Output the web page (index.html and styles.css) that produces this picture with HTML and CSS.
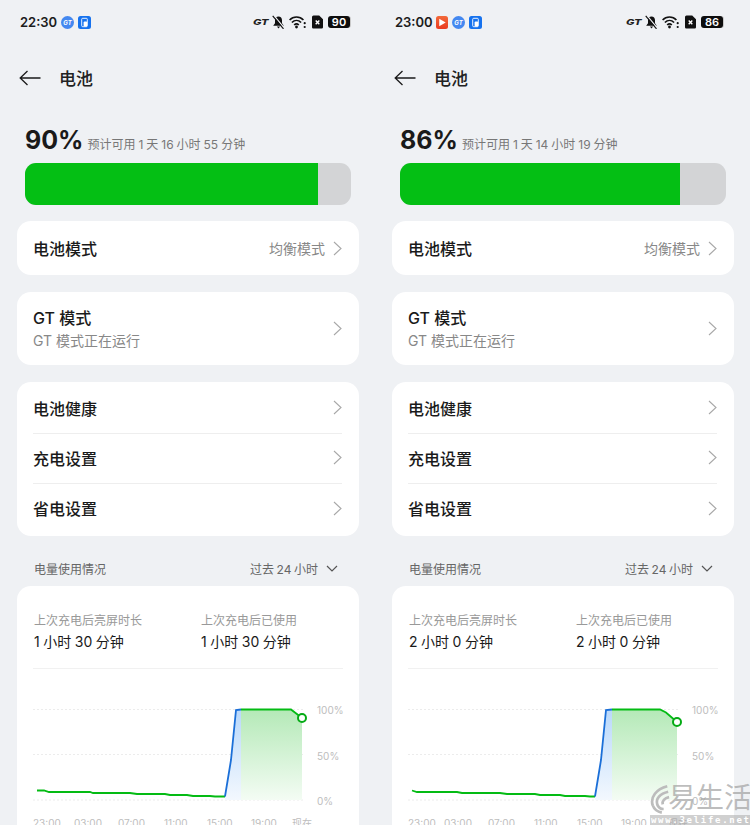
FILE: index.html

```html
<!DOCTYPE html>
<html lang="zh-CN">
<head>
    <meta charset="UTF-8">
    <meta name="viewport" content="width=device-width, initial-scale=1.0">
    <title>电池</title>
    <link rel="stylesheet" href="styles.css">
</head>
<body>
    <svg class="defs" width="0" height="0">
        <defs>
            <linearGradient id="greenFade" x1="0" y1="0" x2="0" y2="1">
                <stop offset="0" stop-color="#b4e9b7"/>
                <stop offset="1" stop-color="#f4fcf4"/>
            </linearGradient>
            <linearGradient id="blueFade" x1="0" y1="0" x2="0" y2="1">
                <stop offset="0" stop-color="#b9d8fb"/>
                <stop offset="1" stop-color="#f3f8fe"/>
            </linearGradient>
            <symbol id="bell" viewBox="0 0 13 14">
                <path d="M6.500 1.500c-2.200 0-3.500 1.600-3.500 3.700v3L1.200 10.800h10.600L10 8.200v-3c0-2.100-1.300-3.700-3.500-3.700z" fill="#111"/>
                <path d="M4.900 11.500h3.200l-1.600 1.900z" fill="#111"/>
                <path d="M1.800 .4l10.400 12.600" stroke="#eff1f4" stroke-width="1.300"/>
                <path d="M.7 .8l10.800 13" stroke="#111" stroke-width="1.200"/>
            </symbol>
            <symbol id="wifi" viewBox="0 0 17 14">
                <g fill="none" stroke="#111" stroke-width="1.700">
                    <path d="M.6 5C4.400 1 10.600 1 14.400 5"/>
                    <path d="M2.900 7.500C5.600 4.800 9.400 4.800 12.100 7.500"/>
                    <path d="M5.200 10C6.600 8.600 8.400 8.600 9.800 10"/>
                </g>
                <circle cx="7.500" cy="12" r="1.400" fill="#111"/>
                <circle cx="15.700" cy="8.200" r="1.100" fill="#111"/>
                <circle cx="15.700" cy="12" r="1.100" fill="#111"/>
            </symbol>
            <symbol id="sim" viewBox="0 0 11 14">
                <path d="M1.500 .5h5.700L11 4.300v8a1.300 1.300 0 0 1-1.300 1.300H1.300A1.300 1.300 0 0 1 0 12.300V2A1.500 1.500 0 0 1 1.500 .5z" fill="#111"/>
                <path d="M3.700 5.500l3.600 3.800M7.300 5.500L3.700 9.300" stroke="#fff" stroke-width="1.400"/>
            </symbol>
            <symbol id="appIcon" viewBox="0 0 13 13">
                <rect width="13" height="13" rx="2.500" fill="#1672ee"/>
                <rect x="3.700" y="2.300" width="5.600" height="8.400" rx="1" fill="none" stroke="#fff" stroke-width=".9"/>
                <rect x="5.600" y="5.600" width="3.600" height="5" rx="1" fill="#fff"/>
            </symbol>
            <symbol id="chevron" viewBox="0 0 9 15">
                <path d="M1 1l7 6.500L1 14" fill="none" stroke="#a8a8a8" stroke-width="1.100"/>
            </symbol>
            <symbol id="back" viewBox="0 0 22 16">
                <path d="M8.500 1L1.200 8l7.300 7M1.200 8H21.500" fill="none" stroke="#1a1a1a" stroke-width="1.300"/>
            </symbol>
        </defs>
    </svg>

    <div class="screens">
        <!-- 左边 22:30 -->
        <div class="phone">
            <div class="status-bar">
                <span class="time">22:30</span>
                <span class="notice"><span class="gt-dot">GT</span></span>
                <svg class="app-icon"><use href="#appIcon"/></svg>
                <div class="status-right">
                    <span class="gt-mark">GT</span>
                    <svg class="ic-bell"><use href="#bell"/></svg>
                    <svg class="ic-wifi"><use href="#wifi"/></svg>
                    <svg class="ic-sim"><use href="#sim"/></svg>
                    <span class="batt"><span class="batt-num">90</span></span>
                </div>
            </div>

            <div class="title-bar">
                <svg class="back"><use href="#back"/></svg>
                <span class="title">电池</span>
            </div>

            <div class="summary">
                <span class="percent">90%</span>
                <span class="estimate">预计可用 1 天 16 小时 55 分钟</span>
            </div>
            <div class="bar"><div class="bar-fill" style="width: 293px"></div></div>

            <div class="card row-single">
                <span class="row-name">电池模式</span>
                <span class="row-value">均衡模式</span>
                <svg class="chevron"><use href="#chevron"/></svg>
            </div>

            <div class="card row-double">
                <div class="row-text">
                    <div class="row-name">GT 模式</div>
                    <div class="row-sub">GT 模式正在运行</div>
                </div>
                <svg class="chevron"><use href="#chevron"/></svg>
            </div>

            <div class="card list">
                <div class="list-row"><span class="row-name">电池健康</span><svg class="chevron"><use href="#chevron"/></svg></div>
                <div class="list-row"><span class="row-name">充电设置</span><svg class="chevron"><use href="#chevron"/></svg></div>
                <div class="list-row"><span class="row-name">省电设置</span><svg class="chevron"><use href="#chevron"/></svg></div>
            </div>

            <div class="section-head">
                <span>电量使用情况</span>
                <span class="range">过去 24 小时
                    <svg class="caret" viewBox="0 0 12 7"><path d="M1 1l5 5 5-5" fill="none" stroke="#555" stroke-width="1.200"/></svg>
                </span>
            </div>

            <div class="card usage">
                <div class="stats">
                    <div class="stat">
                        <div class="stat-label">上次充电后亮屏时长</div>
                        <div class="stat-value">1 小时 30 分钟</div>
                    </div>
                    <div class="stat">
                        <div class="stat-label">上次充电后已使用</div>
                        <div class="stat-value">1 小时 30 分钟</div>
                    </div>
                </div>
                <svg class="chart" viewBox="17 680 342 150">
                    <g class="grid">
                        <path d="M33 709.500H305M33 754.500H305M33 800H305"/>
                    </g>
                    <path d="M225 800V796L231 760L236 710L241 709.500V800z" fill="url(#blueFade)"/>
                    <path d="M241 709.500H291L302 718V800H241z" fill="url(#greenFade)"/>
                    <path class="line-green" d="M37 790.500L44 790.500L49 792L90 792L93 793L130 793L137 794L165 794L170 795L187 795L193 796L210 796L215 796.500L225 796.500"/>
                    <path class="line-blue" d="M225 796.500L231 760L236 710L241 709.500"/>
                    <path class="line-green" d="M241 709.500H291L302 718"/>
                    <circle class="dot" cx="302" cy="718" r="4"/>
                    <g class="axis">
                        <text x="317" y="714">100%</text>
                        <text x="317" y="760">50%</text>
                        <text x="317" y="805">0%</text>
                        <text x="33" y="827">23:00</text>
                        <text x="74" y="827">03:00</text>
                        <text x="118" y="827">07:00</text>
                        <text x="164" y="827">11:00</text>
                        <text x="207" y="827">15:00</text>
                        <text x="251" y="827">19:00</text>
                        <text x="292" y="827">现在</text>
                    </g>
                </svg>
            </div>
        </div>

        <!-- 右边 23:00 -->
        <div class="phone">
            <div class="status-bar">
                <span class="time">23:00</span>
                <span class="play-icon"><svg viewBox="0 0 13 13"><path d="M3.500 2.500l7 4-7 4z" fill="#fff"/></svg></span>
                <span class="notice"><span class="gt-dot">GT</span></span>
                <svg class="app-icon"><use href="#appIcon"/></svg>
                <div class="status-right right-alt">
                    <span class="gt-mark">GT</span>
                    <svg class="ic-bell"><use href="#bell"/></svg>
                    <svg class="ic-wifi"><use href="#wifi"/></svg>
                    <svg class="ic-sim"><use href="#sim"/></svg>
                    <span class="batt"><span class="batt-num">86</span></span>
                </div>
            </div>

            <div class="title-bar">
                <svg class="back"><use href="#back"/></svg>
                <span class="title">电池</span>
            </div>

            <div class="summary">
                <span class="percent">86%</span>
                <span class="estimate">预计可用 1 天 14 小时 19 分钟</span>
            </div>
            <div class="bar"><div class="bar-fill" style="width: 280px"></div></div>

            <div class="card row-single">
                <span class="row-name">电池模式</span>
                <span class="row-value">均衡模式</span>
                <svg class="chevron"><use href="#chevron"/></svg>
            </div>

            <div class="card row-double">
                <div class="row-text">
                    <div class="row-name">GT 模式</div>
                    <div class="row-sub">GT 模式正在运行</div>
                </div>
                <svg class="chevron"><use href="#chevron"/></svg>
            </div>

            <div class="card list">
                <div class="list-row"><span class="row-name">电池健康</span><svg class="chevron"><use href="#chevron"/></svg></div>
                <div class="list-row"><span class="row-name">充电设置</span><svg class="chevron"><use href="#chevron"/></svg></div>
                <div class="list-row"><span class="row-name">省电设置</span><svg class="chevron"><use href="#chevron"/></svg></div>
            </div>

            <div class="section-head">
                <span>电量使用情况</span>
                <span class="range">过去 24 小时
                    <svg class="caret" viewBox="0 0 12 7"><path d="M1 1l5 5 5-5" fill="none" stroke="#555" stroke-width="1.200"/></svg>
                </span>
            </div>

            <div class="card usage">
                <div class="stats">
                    <div class="stat">
                        <div class="stat-label">上次充电后亮屏时长</div>
                        <div class="stat-value">2 小时 0 分钟</div>
                    </div>
                    <div class="stat">
                        <div class="stat-label">上次充电后已使用</div>
                        <div class="stat-value">2 小时 0 分钟</div>
                    </div>
                </div>
                <svg class="chart" viewBox="392 680 342 150">
                    <g class="grid">
                        <path d="M408 709.500H680M408 754.500H680M408 800H680"/>
                    </g>
                    <path d="M595 800V796.500L601 760L606 710L612 709.500V800z" fill="url(#blueFade)"/>
                    <path d="M612 709.500H660L666 712.500L677 722V800H612z" fill="url(#greenFade)"/>
                    <path class="line-green" d="M412 790.500L417 792L457 792L462 793L500 793L507 794L535 794L540 795L560 795L565 796L585 796L590 796.500L595 796.500"/>
                    <path class="line-blue" d="M595 796.500L601 760L606 710L612 709.500"/>
                    <path class="line-green" d="M612 709.500H660L666 712.500L677 722"/>
                    <circle class="dot" cx="677" cy="722" r="4"/>
                    <g class="axis">
                        <text x="692" y="714">100%</text>
                        <text x="692" y="760">50%</text>
                        <text x="692" y="805">0%</text>
                        <text x="408" y="827">23:00</text>
                        <text x="444" y="827">03:00</text>
                        <text x="488" y="827">07:00</text>
                        <text x="534" y="827">11:00</text>
                        <text x="577" y="827">15:00</text>
                        <text x="621" y="827">19:00</text>
                        <text x="668" y="827">现在</text>
                    </g>
                </svg>
            </div>
        </div>
    </div>

    <!-- 水印 -->
    <div class="watermark">
        <div class="wm-top">
            <svg class="wm-arcs" viewBox="0 0 22 32">
                <g fill="none" stroke="#bcbcbc" stroke-width="3">
                    <path d="M19 2C7 5 0 14 3 23c1.500 4 5 7 10 8"/>
                    <path d="M20 8C11 10 6 16 8 22c1 3 4 5 7 5"/>
                    <path d="M21 14c-5 1-8 4-7 8"/>
                </g>
            </svg>
            <span class="wm-name">易生活</span>
        </div>
        <div class="wm-url">www.3elife.net</div>
    </div>
</body>
</html>
```

FILE: styles.css

```css
* { box-sizing: border-box; }
html, body { margin: 0; padding: 0; }
body { width: 750px; height: 825px; overflow: hidden; position: relative; background-color: #eff1f4; color: #1a1a1a; font-family: Inter, "Noto Sans CJK SC", sans-serif; }
.defs { position: absolute; }
.screens { display: flex; }
.phone { width: 375px; height: 825px; overflow: hidden; padding: 0 16px 0 17px; }

/* status bar */
.status-bar { display: flex; align-items: center; height: 44px; margin: 0 8px 0 2px; padding-left: 1px; }
.time { font-size: 13px; font-weight: 600; width: 33px; margin-right: 8px; color: #1c1c1c; }
.notice { width: 13px; height: 13px; margin-right: 4px; }
.gt-dot { display: flex; align-items: center; justify-content: center; width: 13px; height: 13px; border-radius: 50%; background-color: #4488f0; color: #fff; font-size: 6px; font-weight: 700; font-style: italic; }
.app-icon { width: 13px; height: 13px; }
.play-icon { width: 12px; height: 13px; margin-right: 4px; border-radius: 2.500px; background: linear-gradient(#f26a3a, #ea3a20); }
.play-icon svg { display: block; width: 12px; height: 13px; }
.status-right { display: flex; align-items: center; margin-left: auto; }
.right-alt { padding-right: 2px; }
.gt-mark { width: 15px; margin-right: 4px; font-size: 8px; font-weight: 800; font-style: italic; color: #222; transform: scaleX(1.4); transform-origin: left center; }
.ic-bell { width: 13px; height: 14px; margin-right: 4px; }
.ic-wifi { width: 17px; height: 14px; margin-right: 6px; }
.ic-sim { width: 11px; height: 14px; margin-right: 5px; }
.batt { display: flex; width: 23px; height: 12px; border-right: 1px solid #c9c9c9; border-radius: 3px; }
.batt-num { width: 22px; height: 12px; border-radius: 3px; background-color: #0d0d0d; color: #fff; font-size: 11px; font-weight: 600; line-height: 12px; text-align: center; }

/* title */
.title-bar { display: flex; align-items: center; height: 67px; margin-left: 2px; }
.back { width: 22px; height: 16px; margin-right: 18px; }
.title { font-size: 17px; font-weight: 500; color: #222; }

/* battery summary */
.summary { display: flex; align-items: baseline; height: 36px; margin: 11px 0 0 8px; }
.percent { font-size: 25px; font-weight: 700; line-height: 36px; color: #1a1a1a; margin-right: 4px; }
.estimate { font-size: 12px; color: #777; word-spacing: -0.400px; }
.bar { height: 42px; margin: 5px 8px 16px; border-radius: 11px; overflow: hidden; background-color: #d3d4d6; }
.bar-fill { height: 42px; background-color: #04bf14; }

/* cards */
.card { background-color: #fff; border-radius: 14px; margin-bottom: 17px; }
.row-single { display: flex; align-items: center; height: 54px; padding: 0 17px 0 16px; }
.row-name { font-size: 16px; font-weight: 500; color: #1a1a1a; }
.row-value { margin-left: auto; margin-right: 8px; font-size: 14px; color: #888; }
.chevron { width: 9px; height: 15px; }
.row-double { display: flex; align-items: center; justify-content: space-between; height: 73px; padding: 0 17px 0 16px; }
.row-sub { font-size: 14px; color: #888; line-height: 21px; }
.row-double .row-name { line-height: 24px; }
.list { height: 154px; padding: 2px 17px 2px 16px; }
.list-row { display: flex; align-items: center; justify-content: space-between; height: 50px; padding-bottom: 2px; border-bottom: 1px solid #eeeeee; }
.list-row:last-child { border-bottom: none; }
.section-head { display: flex; align-items: center; justify-content: space-between; height: 50px; margin-top: -17px; padding: 15px 21px 1px 17px; font-size: 12px; color: #666; }
.range { display: flex; align-items: center; word-spacing: -0.800px; }
.caret { width: 12px; height: 7px; margin-left: 8px; }

/* usage chart */
.usage { border-bottom-left-radius: 0; border-bottom-right-radius: 0; }
.stats { display: flex; height: 83px; margin: 0 16px; padding: 25px 0 0 1px; border-bottom: 1px solid #f1f1f1; }
.stat { flex: 0 0 167px; }
.stat-label { font-size: 12px; line-height: 20px; color: #999; }
.stat-value { font-size: 14px; line-height: 22px; color: #1a1a1a; word-spacing: -0.400px; }
.chart { display: block; width: 342px; height: 150px; margin-top: 11px; }
.grid path { fill: none; stroke: #ececec; stroke-width: 1; stroke-dasharray: 2 2; }
.line-green { fill: none; stroke: #04bb14; stroke-width: 1.800; }
.line-blue { fill: none; stroke: #1b6fd8; stroke-width: 1.800; }
.dot { fill: #fff; stroke: #04ab14; stroke-width: 2; }
.axis text { font-size: 10px; fill: #bdbdbd; }

/* watermark */
.watermark { position: absolute; right: 0; bottom: 0; width: 100px; }
.wm-top { display: flex; align-items: center; height: 33px; }
.wm-arcs { width: 20px; height: 30px; flex-shrink: 0; }
.wm-name { margin-left: -2px; font-size: 28px; line-height: 33px; white-space: nowrap; color: rgba(160, 160, 160, 0.7); }
.wm-url { height: 10px; padding-left: 1px; background-color: rgba(170, 170, 170, 0.55); color: #fff; font-family: "DejaVu Sans Mono", monospace; font-size: 9px; font-weight: 700; line-height: 10px; letter-spacing: 1.700px; white-space: nowrap; overflow: hidden; }
```
